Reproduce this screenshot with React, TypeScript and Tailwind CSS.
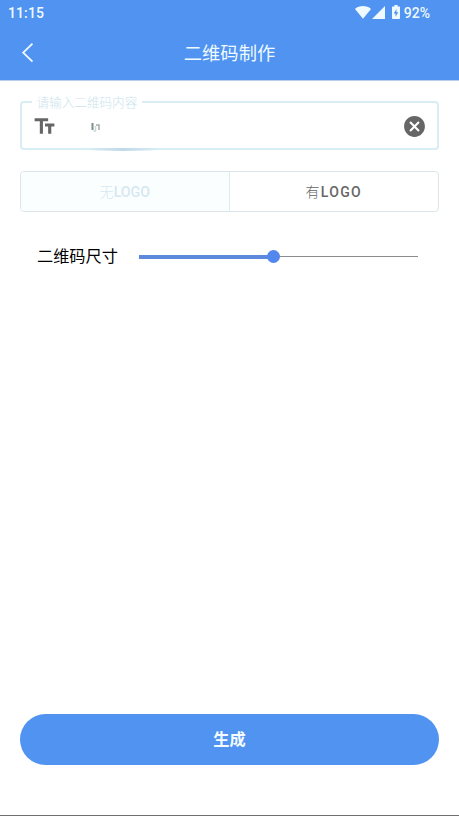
import { useState } from 'react'
import { MdCancel, MdTextFields } from 'react-icons/md'

function StatusBar() {
  return (
    <div className="flex h-[26px] items-center justify-between pr-[29px] pl-[8px] text-[14px] leading-[26px] font-medium text-[#eefaff]">
      <span className="tracking-[0.1px]">11:15</span>
      <div className="flex items-center">
        <svg className="-mt-[2px] h-[13px] w-[16px]" viewBox="0 0 16 13" fill="currentColor">
          <path d="M0 2.9C2.2 1.1 4.9.1 8 .1s5.800 1 8 2.800L8 12.800z" />
        </svg>
        <svg className="-mt-px ml-[1px] h-[13px] w-[13px]" viewBox="0 0 13 13" fill="currentColor">
          <path d="M0 13 13 0v13z" />
        </svg>
        <svg className="-mt-[2px] ml-[7px] h-[14px] w-[8px]" viewBox="0 0 8 14" fill="currentColor">
          <path
            fillRule="evenodd"
            d="M2.400 0h3.200v1.400H7.300q.7 0 .7.700v11.200q0 .7-.7.700H.7q-.7 0-.7-.7V2.100q0-.7.700-.7h1.700zM4.500 3.900 1.700 8.400h1.800v3.300l2.800-4.500H4.500z"
          />
        </svg>
        <span className="ml-[4px]">92%</span>
      </div>
    </div>
  )
}

function Header() {
  return (
    <header className="h-[80px] shrink-0 bg-[#5093f1] shadow-[0_1px_0_#b9cfed]">
      <StatusBar />
      <div className="grid h-[54px] grid-cols-[60px_1fr_60px] items-center text-[#eefaff]">
        <button aria-label="返回" className="pl-[22px]">
          <svg className="h-[20px] w-[12px]" viewBox="0 0 12 20" fill="none" stroke="currentColor" strokeWidth="1.8">
            <path d="M10.500.7 1.200 9.700l9.300 9" />
          </svg>
        </button>
        <h1 className="pt-[2px] text-center text-[18.300px] leading-[52px]">二维码制作</h1>
      </div>
    </header>
  )
}

function ContentField() {
  return (
    <fieldset className="mt-[13px] h-[57px] rounded-[4px] border-2 border-[#d8edf4] pr-[10.500px] pl-[10px]">
      <legend className="h-[18px] px-[4.500px] text-[12.600px] leading-[20px] font-light text-[#cbe3ee]">
        请输入二维码内容
      </legend>
      <div className="flex h-[31px] items-center">
        <MdTextFields className="size-[25px] text-[#666]" />
        {/* smudge left over from the masked value */}
        <svg className="ml-[32px] h-[14px] w-[12px] blur-[0.5px]" viewBox="0 0 12 14" fill="none">
          <path d="M3.500 3v7" stroke="#858b8b" strokeWidth="2" />
          <path d="M4.500 11h2.500M6.500 6v5" stroke="#c5d8da" strokeWidth="1.500" />
          <path d="M7 5h3v5" stroke="#a4abab" strokeWidth="1.500" />
        </svg>
        <button aria-label="清除" className="ml-auto">
          <MdCancel className="size-[25px] text-[#666]" />
        </button>
      </div>
      {/* lies over the bottom border */}
      <div className="relative top-[6px] ml-[56px] h-[3px] w-[70px] rounded-full bg-linear-to-r from-transparent via-[#bfd9e8] to-transparent" />
    </fieldset>
  )
}

export default function App() {
  const [withLogo, setWithLogo] = useState(false)
  const size = 48.2

  return (
    <div className="flex h-[816px] w-full flex-col overflow-hidden border-b border-[#707070] bg-white font-[Roboto,'Noto_Sans_CJK_SC',sans-serif]">
      <Header />
      <main className="flex flex-1 flex-col px-[20px]">
        <ContentField />

        <div className="mt-[21px] grid h-[41px] grid-cols-2 overflow-hidden rounded-[4px] border border-[#dce5e9] text-[14px] font-medium">
          <button
            onClick={() => setWithLogo(false)}
            className={
              withLogo
                ? 'border-r border-[#dcedf2] pt-px text-[#666]'
                : 'border-r border-[#dcedf2] bg-[#fbfeff] pt-[2px] text-[14.200px] text-[#d5e8f0]'
            }
          >
            <span className="font-light">无</span>LOGO
          </button>
          <button
            onClick={() => setWithLogo(true)}
            className={
              withLogo
                ? 'bg-[#fbfeff] pt-px text-[#d5e8f0]'
                : 'pt-px tracking-[1.300px] text-[#666]'
            }
          >
            <span className="font-light">有</span>LOGO
          </button>
        </div>

        <div className="mt-[31px] flex h-[27px] items-center pr-[21px] pl-[17px]">
          <span className="w-[102px] pt-px text-[16.200px] text-black">二维码尺寸</span>
          <div className="flex flex-1 items-center">
            <div className="h-[4px] bg-[#5c89dc]" style={{ width: `${size}%` }} />
            <div className="z-10 -mx-[6.500px] size-[13px] rounded-full bg-[#5287ee]" />
            <div className="h-px flex-1 bg-[#8b8b90]" />
          </div>
        </div>

        <button className="mt-auto mb-[50px] h-[51px] w-full rounded-full bg-[#5093f1] pt-[2px] text-[16.200px] font-bold text-[#f4fcff]">
          生成
        </button>
      </main>
    </div>
  )
}
